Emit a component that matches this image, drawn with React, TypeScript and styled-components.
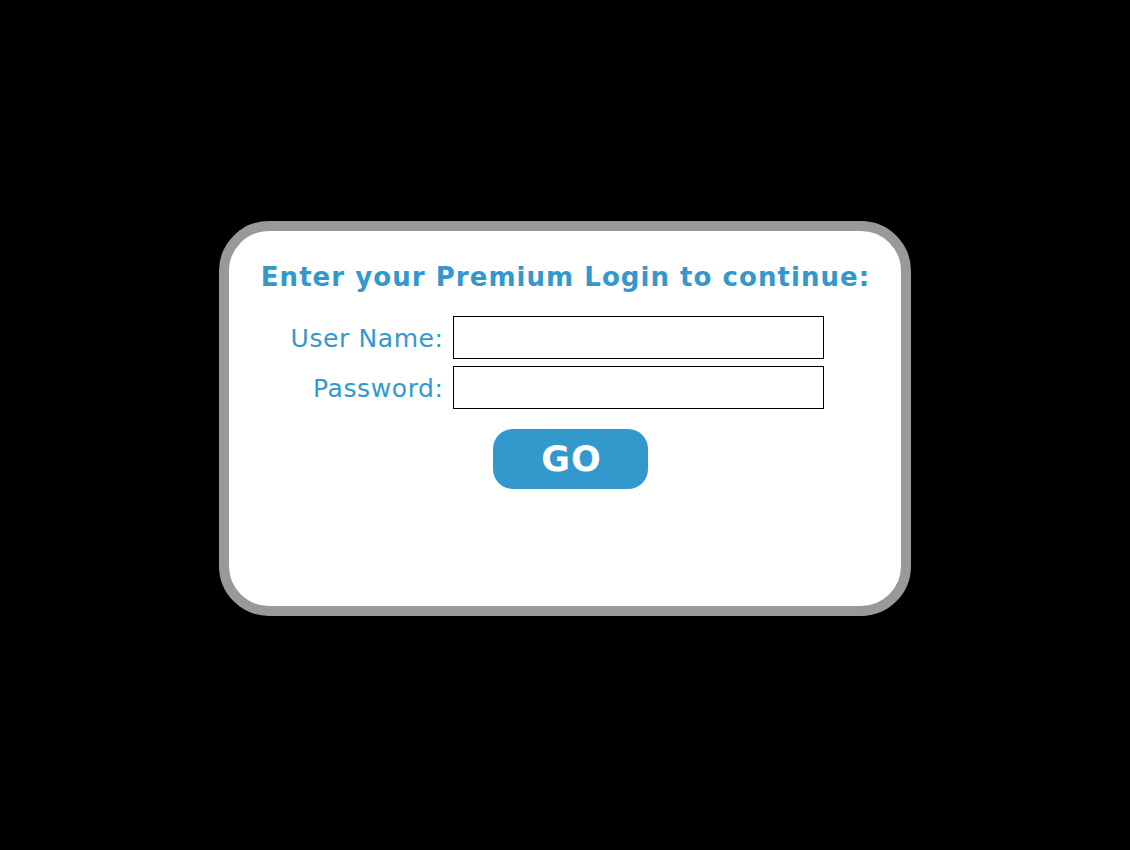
import React from "react";
import styled, { createGlobalStyle } from "styled-components";

const Global = createGlobalStyle`
  html, body { margin: 0; padding: 0; background: #000; }
  body { width: 1130px; height: 850px; overflow: hidden; font-family: "DejaVu Sans", Verdana, sans-serif; }
`;

const Page = styled.div`
  width: 1130px;
  height: 850px;
  background: #000;
  padding-top: 221px;
  padding-left: 219px;
  box-sizing: border-box;
`;

const Card = styled.div`
  width: 692px;
  height: 395px;
  box-sizing: border-box;
  border: 10px solid #999999;
  border-radius: 50px;
  background: #fff;
  display: flex;
  flex-direction: column;
  padding-top: 30px;
`;

const Title = styled.h1`
  margin: 0;
  font-family: "DejaVu Sans", Verdana, sans-serif;
  font-weight: bold;
  font-size: 26px;
  line-height: 32px;
  letter-spacing: 1.05px;
  color: #3399cc;
  text-align: center;
  white-space: nowrap;
  padding-left: 1px;
`;

const Form = styled.div`
  display: grid;
  grid-template-columns: 214px 371px;
  column-gap: 10px;
  row-gap: 7px;
  margin-top: 23px;
  align-items: center;
`;

const Label = styled.label`
  font-family: "DejaVu Sans", Tahoma, sans-serif;
  font-size: 25px;
  color: #3399cc;
  text-align: right;
  white-space: nowrap;
  letter-spacing: 0.6px;
  margin-right: -0.6px;
  padding-top: 2px;
`;

const Input = styled.input`
  width: 371px;
  height: 43px;
  box-sizing: border-box;
  border: 1px solid #000;
  margin: 0;
  padding: 0 4px;
  background: #fff;
  outline: none;
`;

const Go = styled.button`
  align-self: flex-start;
  margin-left: 264px;
  margin-top: 20px;
  width: 155px;
  height: 60px;
  border: none;
  border-radius: 20px;
  background: #3399cc;
  color: #fff;
  font-family: "DejaVu Sans", Verdana, sans-serif;
  font-weight: bold;
  font-size: 35px;
  letter-spacing: 1px;
  padding: 0 0 0 2px;
  cursor: pointer;
`;

export default function App() {
  return (
    <Page>
      <Global />
      <Card>
        <Title>Enter your Premium Login to continue:</Title>
        <Form>
          <Label htmlFor="u">User Name:</Label>
          <Input id="u" type="text" />
          <Label htmlFor="p">Password:</Label>
          <Input id="p" type="password" />
        </Form>
        <Go>GO</Go>
      </Card>
    </Page>
  );
}
